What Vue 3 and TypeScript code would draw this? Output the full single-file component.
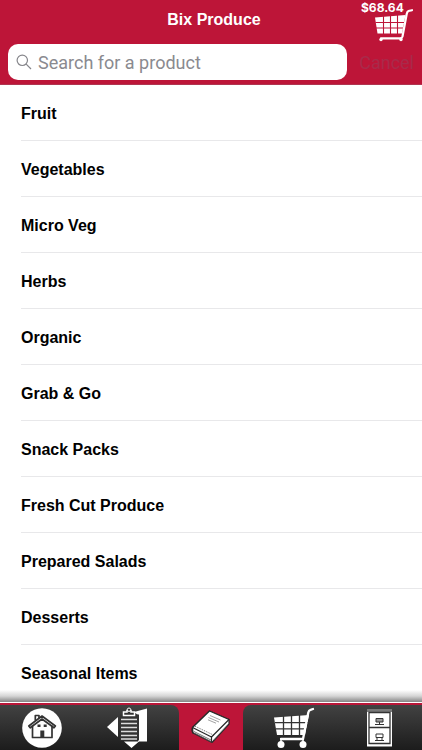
<script setup lang="ts">
import { ref } from 'vue'

const categories: string[] = [
  'Fruit',
  'Vegetables',
  'Micro Veg',
  'Herbs',
  'Organic',
  'Grab & Go',
  'Snack Packs',
  'Fresh Cut Produce',
  'Prepared Salads',
  'Desserts',
  'Seasonal Items',
]

const query = ref('')
const cartTotal = '$68.64'
</script>

<template>
  <div class="page">
    <header class="header">
      <div class="title-row">
        <h1 class="title">Bix Produce</h1>
        <button class="cart" type="button">
          <span class="total">{{ cartTotal }}</span>
          <svg class="cart-icon" viewBox="0 0 40 34" aria-hidden="true">
            <path d="M1 8.500 31.500 6 28 24.500H3.500Z" fill="#fff" />
            <path d="M1.500 13.500H30.500M2 19H29.500M9.500 7V25M16.500 7V25M23.500 6V25" stroke="#bd1538" stroke-width="1.100" />
            <path d="M38 1.200 34.500 2Q33.200 2.500 32.700 5L28.500 27.500Q28 29.300 26 29.300H7" fill="none" stroke="#fff" stroke-width="2.200" stroke-linecap="round" />
            <circle cx="7" cy="30.500" r="1.700" fill="#fff" />
            <circle cx="27" cy="30.500" r="1.700" fill="#fff" />
          </svg>
        </button>
      </div>
      <form class="search-row" @submit.prevent>
        <label class="field">
          <svg class="glass" viewBox="0 0 16 16" aria-hidden="true">
            <circle cx="6.300" cy="6.300" r="5.200" />
            <path d="M10.200 10.200 15 15" />
          </svg>
          <input v-model="query" class="input" type="text" placeholder="Search for a product" aria-label="Search for a product" />
        </label>
        <button class="cancel" type="reset" @click="query = ''">Cancel</button>
      </form>
    </header>

    <main class="list-area">
      <ul class="list">
        <li v-for="name in categories" :key="name" class="item">
          <a class="link" href="#">{{ name }}</a>
        </li>
      </ul>
    </main>

    <nav class="tabs">
      <div class="group left">
        <a class="tab" href="#" aria-label="Home">
          <svg class="icon" viewBox="0 0 42 42" aria-hidden="true">
            <circle cx="21" cy="21" r="19.800" fill="#fff" />
            <g fill="none" stroke="#333" stroke-width="1.700" stroke-linejoin="round">
              <path d="M11.500 18.500V30.500H31V18.500" />
              <path d="M21 9 7.800 19 9.200 20.800 21 12 33 20.800 34.400 19Z" />
              <path d="M14.300 13.500V8.500H18V11" />
            </g>
            <path d="M19.300 23.500H23.300V31H19.300Z" fill="#333" />
            <path d="M16.500 17.500H19.500V20H16.500ZM22.700 17.500H25.700V20H22.700Z" fill="#333" />
          </svg>
        </a>
        <a class="tab" href="#" aria-label="Orders">
          <svg class="icon" viewBox="0 0 42 42" aria-hidden="true">
            <path d="M1 20 12 10V30Z" fill="#fff" />
            <path d="M28 5 41 1.500V34.500H33L25.500 41 18 34.500H32V8Z" fill="#fff" />
            <path d="M14 7.500H33V33.500H14Z" fill="#333" />
            <path d="M15 12.500H31M15 16.500H31M15 20.500H31M15 24.500H31M15 28.500H31M15 32H31" stroke="#ddd" stroke-width="1.500" />
            <path d="M17.500 8.500V5H21V3.500H25V5H28.500V8.500Z" fill="#333" stroke="#fff" stroke-width="1.500" />
            <circle cx="23" cy="2.700" r="1.700" fill="#333" stroke="#fff" />
          </svg>
        </a>
      </div>
      <a class="tab selected" href="#" aria-label="Catalog" aria-current="page">
        <svg class="icon" viewBox="0 0 42 42" aria-hidden="true">
          <g stroke="#282828" stroke-width="1.200" stroke-linejoin="round">
            <path d="M2.500 20.500 19.500 4 39 12.500V17L22 35.500 3 26Z" fill="#fff" />
            <path d="M2.500 20.500 21.500 30 39 12.500 19.500 4Z" fill="#fff" />
            <path d="M21.500 30V35M2.500 20.500Q1 24 3.500 26.500" fill="none" />
            <path d="M5 19.200 24 28.300" fill="none" stroke-dasharray="1 1" stroke-width="0.700" />
          </g>
          <path d="M4 24.500 21 33M4.500 26 21.500 34.800" stroke="#555" stroke-width="0.800" />
          <path d="M23.500 33 38 17" stroke="#999" stroke-width="0.700" />
          <path d="M20 8.500 30.500 13M18.500 10.500 29 15M18 12.800 26 16.200" stroke="#999" stroke-width="0.900" />
        </svg>
      </a>
      <div class="group right">
        <a class="tab" href="#" aria-label="Cart">
          <svg class="icon" viewBox="0 0 42 42" aria-hidden="true">
            <path d="M0 10.500 35 8 31 28H3Z" fill="#fff" />
            <path d="M1 15.700H35M2 21.800H34M9.500 9V28.500M17.500 8V28.500M25.500 8V28.500" stroke="#333" stroke-width="1.300" />
            <path d="M39 2 36.500 2.800Q34.800 3.300 34.300 5.500L29 32H7" fill="none" stroke="#fff" stroke-width="2.300" stroke-linecap="round" />
            <path d="M7 32V36M29 32V36" stroke="#fff" stroke-width="1.500" />
            <circle cx="7" cy="37.500" r="3.500" fill="#fff" />
            <circle cx="29" cy="37.500" r="3.500" fill="#fff" />
          </svg>
        </a>
        <a class="tab" href="#" aria-label="Files">
          <svg class="icon" viewBox="0 0 42 42" aria-hidden="true">
            <path d="M8 2H33V39.500H8Z" fill="#fff" />
            <path d="M8 2H33V5H8Z" fill="#777" />
            <path d="M10 5.500H31V36.500H10ZM10 20.500H31" fill="none" stroke="#333" stroke-width="1.300" />
            <g fill="#999" stroke="#333" stroke-width="1">
              <path d="M17 11.500H24V15H17Z" />
              <path d="M17 27H24V30.500H17Z" fill="#fff" />
              <path d="M16 17.500H25M20.500 15V17.500M16 33.500H25M18 30.500V33M23 30.500V33" />
            </g>
          </svg>
        </a>
      </div>
    </nav>
  </div>
</template>

<style>
body {
  background: #fff;
}
</style>

<style scoped>
.page {
  display: flex;
  flex-direction: column;
  height: 100vh;
  font-family: "Liberation Sans", Arial, sans-serif;
  color: #000;
  background: #fff;
}

button,
input {
  border: 0;
  padding: 0;
  background: none;
  font: inherit;
}

.header {
  flex: none;
  background: #bd1538;
  border-bottom: 1px solid #b03550;
}

.title-row {
  display: grid;
  grid-template-columns: 64px 1fr 58px;
  height: 44px;
}

.title {
  grid-column: 2;
  margin: 0;
  padding-top: 10px;
  font-size: 16px;
  line-height: 20px;
  font-weight: 700;
  text-align: center;
  color: #fff;
}

.cart {
  display: flex;
  flex-direction: column;
  align-items: flex-start;
  margin-left: -6px;
  color: #fff;
}

.total {
  padding-left: 3px;
  font-family: Inter, sans-serif;
  font-size: 12px;
  line-height: 16px;
  font-weight: 700;
}

.cart-icon {
  width: 40px;
  height: 34px;
  margin: -7px 0 0 16px;
}

.search-row {
  display: flex;
  align-items: center;
  gap: 12px;
  padding: 0 8px 4px;
  font-family: Roboto, sans-serif;
  font-size: 18px;
}

.field {
  display: flex;
  flex: 1;
  align-items: center;
  gap: 6px;
  min-width: 0;
  height: 36px;
  padding: 0 8px;
  border-radius: 10px;
  background: #fff;
}

.glass {
  flex: none;
  width: 16px;
  height: 16px;
  fill: none;
  stroke: #85858a;
  stroke-width: 1.2;
}

.input {
  flex: 1;
  min-width: 0;
  height: 36px;
  outline: 0;
}

.input::placeholder {
  color: #8a8a8f;
  opacity: 1;
}

.cancel {
  color: #a92a4a;
}

.list-area {
  flex: 1;
  min-height: 0;
  overflow-y: auto;
  scrollbar-width: none;
}

.list {
  margin: 0;
  padding: 0 0 0 21px;
  list-style: none;
}

.item {
  border-bottom: 1px solid #e8e8ea;
}

.item:last-child {
  border-bottom: 0;
}

.link {
  display: block;
  height: 55px;
  font-size: 16px;
  line-height: 58px;
  font-weight: 700;
  color: inherit;
  text-decoration: none;
}

.tabs {
  position: relative;
  display: flex;
  flex: none;
  height: 45px;
  border-top: 2px solid #b91638;
  background: #bd1538;
  box-shadow: 0 -1px #fff;
}

.tabs::before {
  content: "";
  position: absolute;
  right: 0;
  bottom: 100%;
  left: 0;
  height: 12px;
  margin-bottom: 3px;
  background: linear-gradient(rgba(255, 255, 255, 0), #d5d5d5 50%, #858585);
}

.group {
  display: grid;
  flex: 1;
  grid-template-columns: 1fr 1fr;
  background: linear-gradient(#424242, #1c1c1c);
}

.left {
  padding-right: 10px;
  border-top-right-radius: 8px;
}

.right {
  padding-left: 10px;
  border-top-left-radius: 8px;
}

.tab {
  display: flex;
  align-items: center;
  justify-content: center;
}

.selected {
  width: 64px;
}

.icon {
  width: 42px;
  height: 42px;
}
</style>
